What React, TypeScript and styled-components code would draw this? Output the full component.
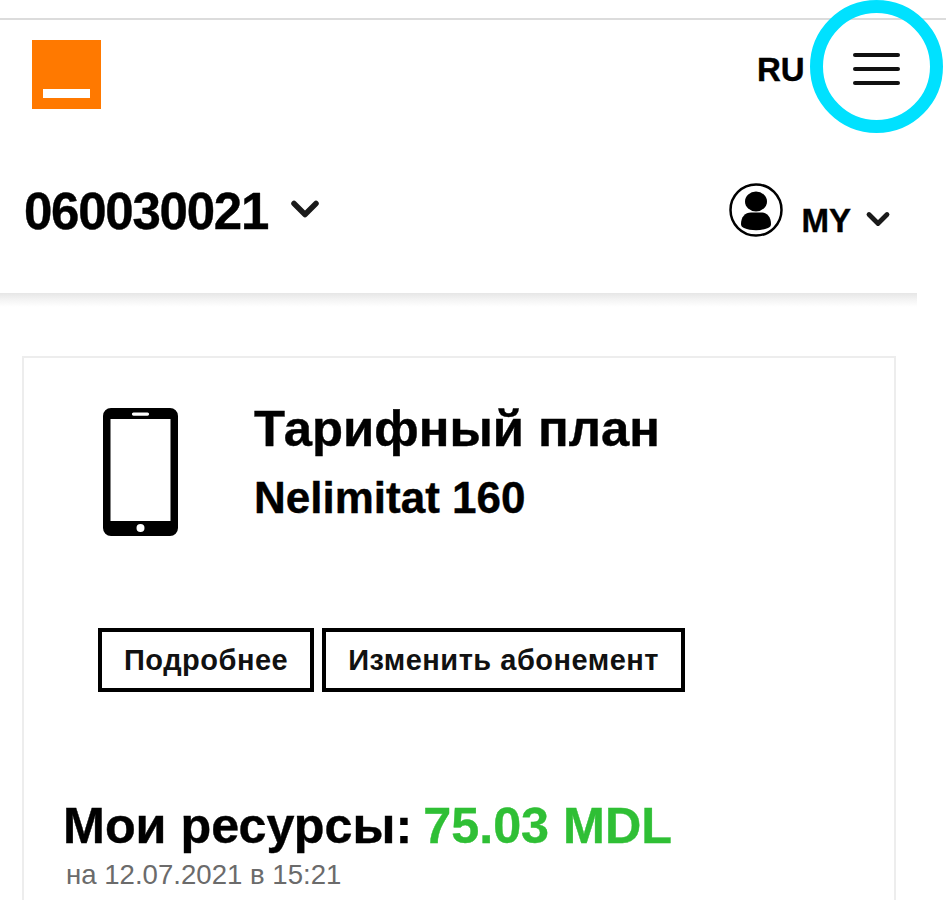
import React from "react";
import styled, { createGlobalStyle } from "styled-components";
import { ChevronDown } from "lucide-react";

const GlobalStyles = createGlobalStyle`
  html, body {
    margin: 0;
    padding: 0;
    height: 900px;
    overflow: hidden;
    background: #fff;
    font-family: "Liberation Sans", Arial, sans-serif;
    color: #000;
  }
`;

const Page = styled.div`
  position: relative;
  width: 946px;
  height: 900px;
  overflow: hidden;
  padding-top: 18px;
  box-sizing: border-box;
`;

const Header = styled.header`
  width: 917px;
  height: 273px;
  box-sizing: border-box;
  background: #fff;
`;

const HeaderShadow = styled.div`
  width: 917px;
  height: 14px;
  background: linear-gradient(#e6e6e6, #f3f3f3 45%, #fff);
`;

const TopLine = styled.div`
  width: 946px;
  height: 2px;
  background: #dcdcdc;
`;

const TopRow = styled.div`
  display: flex;
  align-items: flex-start;
  justify-content: space-between;
  padding: 20px 16px 0 32px;
  height: 112px;
  box-sizing: border-box;
`;

const Logo = styled.div`
  width: 69px;
  height: 69px;
  background: #ff7900;
  display: flex;
  align-items: flex-end;
  justify-content: center;
  padding-bottom: 11px;
  box-sizing: border-box;
`;

const LogoBar = styled.div`
  width: 47px;
  height: 9px;
  background: #fff;
`;

const TopActions = styled.div`
  display: flex;
  align-items: flex-start;
  width: 144px;
`;

const Lang = styled.span`
  font-size: 33px;
  font-weight: 700;
  line-height: 38px;
  margin-top: 11px;
  -webkit-text-stroke: 0.4px #000;
`;

const Burger = styled.div`
  display: flex;
  flex-direction: column;
  gap: 10px;
  margin: 13px 0 0 48px;
  width: 47px;
  flex: none;
`;

const BurgerLine = styled.div`
  height: 4px;
  border-radius: 2px;
  background: #111;
`;

const AccountRow = styled.div`
  display: flex;
  align-items: flex-start;
  justify-content: space-between;
  padding: 51px 21px 0 24px;
`;

const NumberPick = styled.div`
  display: flex;
  align-items: flex-start;
`;

const PhoneNumber = styled.span`
  font-size: 51px;
  font-weight: 700;
  line-height: 56px;
  letter-spacing: -1.25px;
  margin-top: 1px;
  -webkit-text-stroke: 0.4px #000;
`;

const Chevron = styled(ChevronDown)<{ $size: number; $top: number; $left: number }>`
  width: ${(p) => p.$size}px;
  height: ${(p) => p.$size}px;
  margin-top: ${(p) => p.$top}px;
  margin-left: ${(p) => p.$left}px;
  color: #1a1a1a;
  flex: none;
`;

const AccountPick = styled.div`
  display: flex;
  align-items: flex-start;
`;

const My = styled.span`
  font-size: 33px;
  font-weight: 700;
  line-height: 37px;
  margin: 19px 0 0 19px;
  -webkit-text-stroke: 0.4px #000;
`;

const Card = styled.section`
  width: 874px;
  height: 700px;
  box-sizing: border-box;
  margin: 49px 0 0 22px;
  border: 2px solid #ededed;
  padding: 0 0 0 40px;
`;

const PlanRow = styled.div`
  display: flex;
  align-items: flex-start;
  padding: 50px 0 0 39px;
`;

const PlanText = styled.div`
  margin-left: 76px;
`;

const PlanTitle = styled.h2`
  margin: -8px 0 0;
  font-size: 50.8px;
  font-weight: 700;
  line-height: 58px;
  -webkit-text-stroke: 0.4px #000;
`;

const PlanName = styled.div`
  font-size: 44px;
  font-weight: 700;
  line-height: 50px;
  margin-top: 15px;
  -webkit-text-stroke: 0.4px #000;
`;

const Buttons = styled.div`
  display: flex;
  gap: 8px;
  margin: 92px 0 0 34px;
`;

const OutlineButton = styled.button`
  height: 64px;
  box-sizing: border-box;
  border: 4px solid #000;
  background: #fff;
  padding: 0 22px;
  font-family: inherit;
  font-size: 29px;
  font-weight: 700;
  letter-spacing: 0.5px;
  color: #111;
`;

const Resources = styled.h3`
  margin: 103px 0 0 -1px;
  font-size: 50.3px;
  font-weight: 700;
  line-height: 62px;
  -webkit-text-stroke: 0.4px currentColor;
`;

const Amount = styled.span`
  color: #2fbf35;
  margin-left: -3px;
`;

const DateLine = styled.div`
  margin: 1px 0 0 2px;
  font-size: 27.6px;
  line-height: 34px;
  color: #6b6b6b;
`;

const Ring = styled.div`
  position: absolute;
  left: 810px;
  top: 0;
  width: 133px;
  height: 133px;
  box-sizing: border-box;
  border: 13px solid #00e1ff;
  border-radius: 50%;
`;

const PhoneIcon = () => (
  <svg width="75" height="128" viewBox="0 0 75 128" style={{ flex: "none" }}>
    <path
      fillRule="evenodd"
      fill="#000"
      d="M8 0h59a8 8 0 0 1 8 8v112a8 8 0 0 1-8 8H8a8 8 0 0 1-8-8V8a8 8 0 0 1 8-8zM7.500 11v102h60V11zM30.500 4.500a1.500 1.500 0 0 0 0 3.200h14a1.500 1.500 0 0 0 0-3.200zM37.500 116a4 4 0 1 0 0 8 4 4 0 0 0 0-8z"
    />
  </svg>
);

const UserIcon = () => (
  <svg width="54" height="54" viewBox="0 0 54 54" style={{ flex: "none" }}>
    <circle cx="27" cy="27" r="25.500" fill="none" stroke="#000" strokeWidth="2.500" />
    <ellipse cx="27" cy="18.500" rx="11" ry="10" fill="#000" />
    <path fill="#000" d="M12 41c0-7 4-11.500 10-11.500h10c6 0 10 4.500 10 11.500 0 2-1 3-3 4-7 3-17 3-24 0-2-1-3-2-3-4z" />
  </svg>
);

const App: React.FC = () => {
  return (
    <>
      <GlobalStyles />
      <Page>
        <TopLine />
        <Header>
          <TopRow>
            <Logo>
              <LogoBar />
            </Logo>
            <TopActions>
              <Lang>RU</Lang>
              <Burger>
                <BurgerLine />
                <BurgerLine />
                <BurgerLine />
              </Burger>
            </TopActions>
          </TopRow>
          <AccountRow>
            <NumberPick>
              <PhoneNumber>060030021</PhoneNumber>
              <Chevron $size={44} $top={4} $left={15} strokeWidth={3} />
            </NumberPick>
            <AccountPick>
              <UserIcon />
              <My>MY</My>
              <Chevron $size={36} $top={18} $left={9} strokeWidth={3.2} />
            </AccountPick>
          </AccountRow>
        </Header>
        <HeaderShadow />
        <Card>
          <PlanRow>
            <PhoneIcon />
            <PlanText>
              <PlanTitle>Тарифный план</PlanTitle>
              <PlanName>Nelimitat 160</PlanName>
            </PlanText>
          </PlanRow>
          <Buttons>
            <OutlineButton>Подробнее</OutlineButton>
            <OutlineButton>Изменить абонемент</OutlineButton>
          </Buttons>
          <Resources>
            Мои ресурсы: <Amount>75.03 MDL</Amount>
          </Resources>
          <DateLine>на 12.07.2021 в 15:21</DateLine>
        </Card>
        <Ring />
      </Page>
    </>
  );
};

export default App;
